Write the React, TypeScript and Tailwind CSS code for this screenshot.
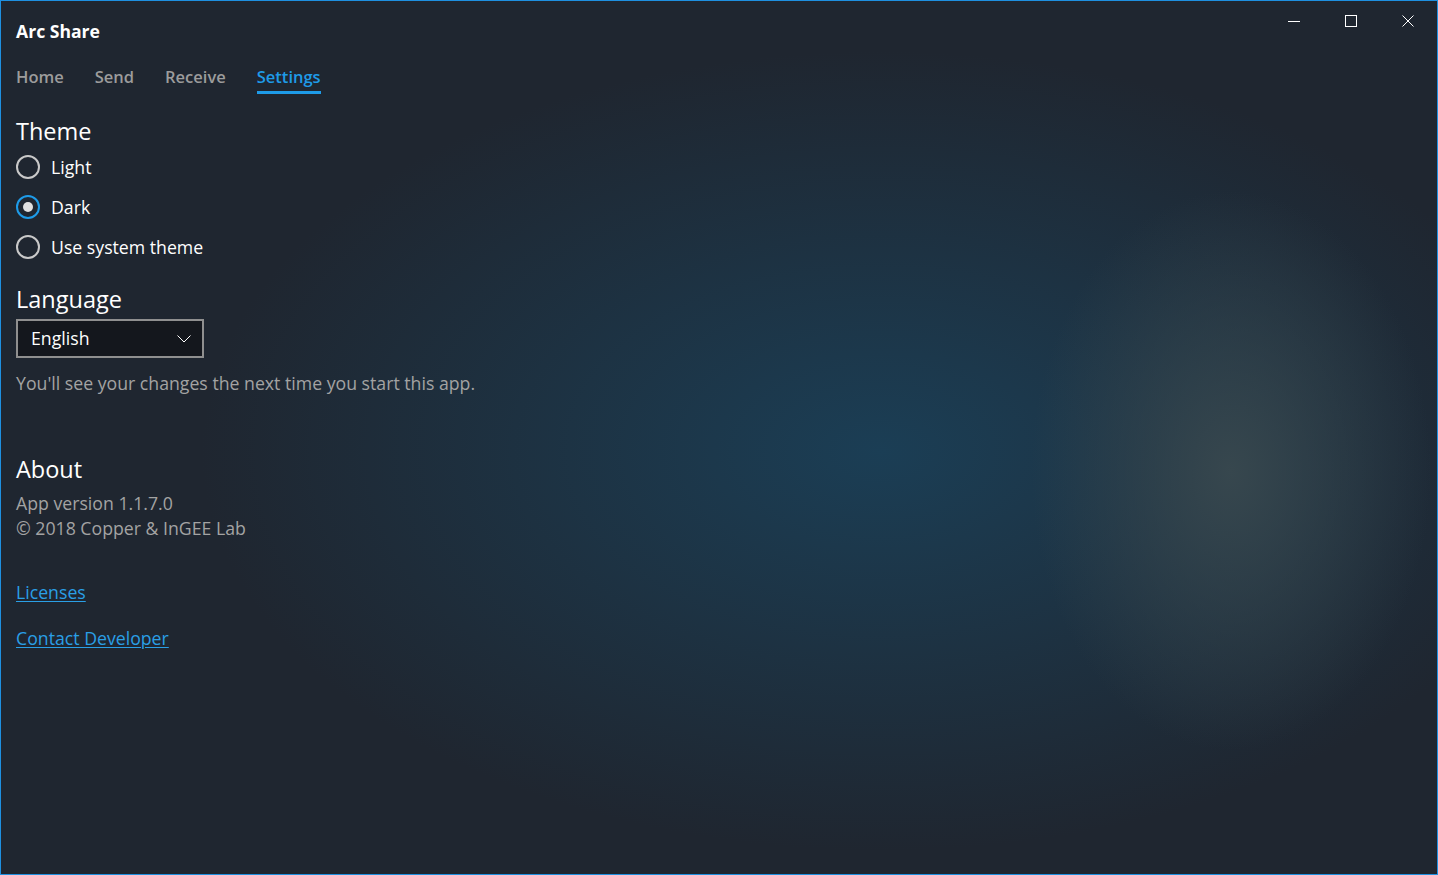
import React from "react";

const font = "font-['Segoe_UI','Open_Sans',sans-serif]";

function Radio({ label, checked }: { label: string; checked?: boolean }) {
  return (
    <label className="flex h-10 items-center gap-[11px]">
      {checked ? (
        <span className="flex h-[24px] w-[24px] items-center justify-center rounded-full border-2 border-[#1e9be8]">
          <span className="h-[10px] w-[10px] rounded-full bg-[#e0e0e0]" />
        </span>
      ) : (
        <span className="h-[24px] w-[24px] rounded-full border-2 border-[#c9c9c9]" />
      )}
      <span className="text-[17.7px] text-white">{label}</span>
    </label>
  );
}

export default function App() {
  const tabs = ["Home", "Send", "Receive", "Settings"];
  return (
    <div
      className={`${font} relative h-[875px] w-[1438px] overflow-hidden border border-[#1e90e0] bg-[#1f2630] bg-[radial-gradient(ellipse_200px_280px_at_1230px_470px,#37474e_0%,rgba(31,38,48,0)_100%),radial-gradient(ellipse_680px_400px_at_880px_450px,#1b3e55_0%,rgba(31,38,48,0)_100%)]`}
    >
      {/* Title bar */}
      <div className="flex h-[46px] items-start justify-between">
        <div className="pl-[15px] pt-[18px] text-[17.6px] font-bold leading-6 text-white">Arc Share</div>
        <div className="mr-[1px] flex">
          <button className="flex h-[39px] w-[57px] items-center justify-center">
            <svg width="12" height="12" viewBox="0 0 12 12"><path d="M0 6.5h12" stroke="#fff" strokeWidth="1" /></svg>
          </button>
          <button className="flex h-[39px] w-[57px] items-center justify-center">
            <svg width="12" height="12" viewBox="0 0 12 12"><rect x="0.5" y="0.5" width="11" height="11" fill="none" stroke="#fff" /></svg>
          </button>
          <button className="flex h-[39px] w-[57px] items-center justify-center">
            <svg width="12" height="12" viewBox="0 0 12 12"><path d="M0.5 0.5l11 11M11.5 0.5l-11 11" stroke="#fff" strokeWidth="1" /></svg>
          </button>
        </div>
      </div>

      {/* Tabs */}
      <nav className="mt-[18px] flex gap-[31px] pl-[15px]">
        {tabs.map((t) => (
          <div
            key={t}
            className={`border-b-[3px] pb-[2px] text-[16.5px] font-semibold leading-6 ${
              t === "Settings" ? "border-[#1e9be8] text-[#1e9be8]" : "border-transparent text-[#9c9c9c]"
            }`}
          >
            {t}
          </div>
        ))}
      </nav>

      <main className="pl-[15px] pt-[21px]">
        <h2 className="text-[23.5px] leading-8 text-white">Theme</h2>
        <div className="flex flex-col">
          <Radio label="Light" />
          <Radio label="Dark" checked />
          <Radio label="Use system theme" />
        </div>

        <h2 className="mt-[16px] text-[23.5px] leading-8 text-white">Language</h2>
        <div className="mt-[4px] flex h-[39px] w-[188px] items-center justify-between border-2 border-[#8f8f8f] bg-[#14171d] pl-[13px] pr-[11px]">
          <span className="text-[17.7px] text-white">English</span>
          <svg width="14" height="8" viewBox="0 0 14 8"><path d="M0.5 0.5l6.5 6.5 6.5-6.5" fill="none" stroke="#fff" strokeWidth="1" /></svg>
        </div>
        <p className="mt-[12px] text-[17.7px] text-[#a3a3a3]">You'll see your changes the next time you start this app.</p>

        <h2 className="mt-[56px] text-[23.5px] leading-8 text-white">About</h2>
        <div className="mt-[6px] text-[17.7px] leading-[25px] text-[#a3a3a3]">
          <p>App version 1.1.7.0</p>
          <p>© 2018 Copper &amp; InGEE Lab</p>
        </div>
        <div className="mt-[38px] flex flex-col gap-[20px] text-[17.7px] leading-[26px]">
          <a className="w-fit text-[#2a9fe6] underline underline-offset-2">Licenses</a>
          <a className="w-fit text-[#2a9fe6] underline underline-offset-2">Contact Developer</a>
        </div>
      </main>
    </div>
  );
}
